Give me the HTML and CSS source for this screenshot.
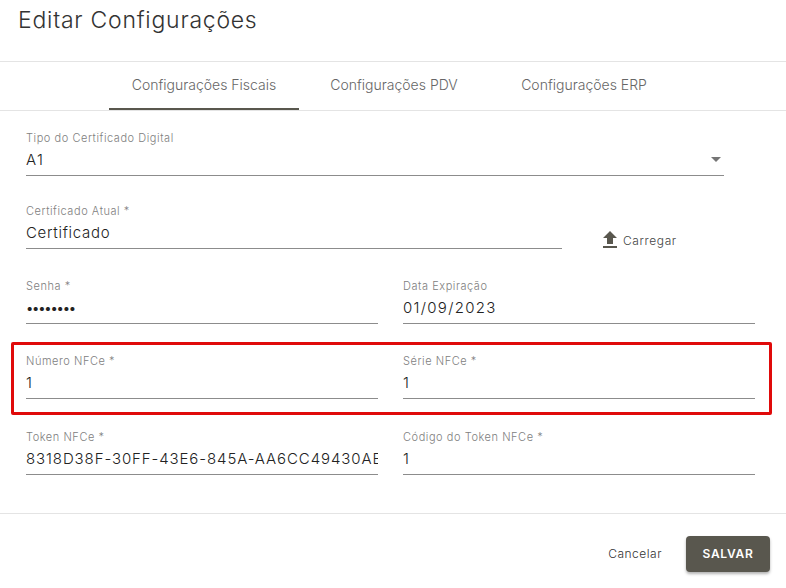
FILE: index.html
```html
<!DOCTYPE html>
<html lang="pt-BR">

<head>
    <meta charset="utf-8">
    <title>Editar Configurações</title>
    <link rel="stylesheet" href="styles.css">
</head>

<body>

    <div class="dialog">
        <h2 class="dialog-title">Editar Configurações</h2>

        <div class="tabs">
            <a class="tab active">Configurações Fiscais</a>
            <a class="tab">Configurações PDV</a>
            <a class="tab">Configurações ERP</a>
        </div>

        <div class="form">
            <div class="row row-select">
                <div class="field field-select">
                    <label>Tipo do Certificado Digital</label>
                    <div class="value value-date">A1<span class="arrow"></span></div>
                </div>
            </div>

            <div class="row row-upload">
                <div class="field field-file">
                    <label>Certificado Atual *</label>
                    <div class="value">Certificado</div>
                </div>
                <a class="upload">
                    <svg width="24" height="24" viewBox="0 0 24 24"><path d="M9 16h6v-6h4l-7-7-7 7h4zm-4 2h14v2H5z" /></svg>
                    Carregar
                </a>
            </div>

            <div class="row">
                <div class="field">
                    <label>Senha *</label>
                    <div class="value value-secret">••••••••</div>
                </div>
                <div class="field">
                    <label>Data Expiração</label>
                    <div class="value value-date">01/09/2023</div>
                </div>
            </div>

            <div class="row">
                <div class="field">
                    <label>Número NFCe *</label>
                    <div class="value">1</div>
                </div>
                <div class="field">
                    <label>Série NFCe *</label>
                    <div class="value">1</div>
                </div>
            </div>

            <div class="row row-last">
                <div class="field">
                    <label>Token NFCe *</label>
                    <div class="value value-token">8318D38F-30FF-43E6-845A-AA6CC49430AE</div>
                </div>
                <div class="field">
                    <label>Código do Token NFCe *</label>
                    <div class="value">1</div>
                </div>
            </div>

            <div class="highlight"></div>
        </div>

        <div class="actions">
            <a class="btn-cancel">Cancelar</a>
            <a class="btn-save">SALVAR</a>
        </div>
    </div>

</body>

</html>
```

FILE: styles.css
```css
body {
    margin: 0;
    font-family: Inter, "Liberation Sans", sans-serif;
    color: #333333;
    background-color: #ffffff;
    overflow: hidden;
}

.dialog {
    height: 588px;
}

.dialog-title {
    margin: 0;
    padding: 5px 18px 0;
    height: 61px;
    box-sizing: border-box;
    font-size: 23px;
    line-height: 30px;
    font-weight: 300;
    letter-spacing: .75px;
    color: #333333;
}

/* Tabs */
.tabs {
    display: flex;
    justify-content: center;
    height: 48px;
    padding-left: 2px;
    border-top: 1px solid #e4e4e4;
    border-bottom: 1px solid #e4e4e4;
}

.tab {
    width: 190px;
    box-sizing: border-box;
    padding-top: 13px;
    text-align: center;
    font-size: 14px;
    line-height: 20px;
    font-weight: 300;
    color: #666666;
}

.tab.active {
    border-bottom: 2px solid #59574e;
}

/* Form */
.form {
    position: relative;
    height: 381px;
    padding: 21px 31px 0 26px;
}

.row {
    display: flex;
    gap: 25px;
    margin-bottom: 31px;
}

.row-select {
    padding-right: 31px;
    margin-bottom: 29px;
}

.row-last {
    margin-bottom: 0;
    padding-top: 1px;
}

.field {
    flex: 1;
    min-width: 0;
}

.field label {
    display: block;
    font-size: 11px;
    line-height: 12px;
    font-weight: 300;
    letter-spacing: .55px;
    color: #808080;
}

.value {
    position: relative;
    height: 31px;
    line-height: 32px;
    font-size: 15px;
    font-weight: 300;
    letter-spacing: .7px;
    color: #222222;
    white-space: nowrap;
    overflow: hidden;
    border-bottom: 1px solid #8c8c8c;
}

.value-date {
    letter-spacing: 1.3px;
}

.value-token {
    letter-spacing: .9px;
}

.value-secret {
    font-size: 13px;
    font-weight: 400;
    letter-spacing: -1.2px;
}

.arrow {
    position: absolute;
    right: 3px;
    top: 13px;
    border-left: 5px solid transparent;
    border-right: 5px solid transparent;
    border-top: 5px solid #757575;
}

.row-upload {
    gap: 0;
}

.field-file {
    flex: 0 0 536px;
}

.upload {
    display: flex;
    align-items: center;
    margin: 23px 0 -3px 36px;
    font-size: 12px;
    font-weight: 300;
    letter-spacing: .6px;
    color: #444444;
}

.upload svg {
    fill: #59574e;
    margin-right: 1px;
}

/* Red box around the NFCe row */
.highlight {
    position: absolute;
    left: 11px;
    top: 231px;
    width: 755px;
    height: 67px;
    border: 3px solid #e00a0a;
    border-radius: 2px;
}

/* Footer */
.actions {
    display: flex;
    justify-content: flex-end;
    align-items: center;
    gap: 24px;
    height: 74px;
    box-sizing: border-box;
    padding: 6px 16px 0 0;
    border-top: 1px solid #e4e4e4;
}

.btn-cancel {
    font-size: 12px;
    font-weight: 300;
    letter-spacing: .5px;
    color: #333333;
}

.btn-save {
    width: 84px;
    height: 36px;
    line-height: 36px;
    text-align: center;
    font-size: 12px;
    font-weight: 600;
    letter-spacing: .7px;
    color: #ffffff;
    background-color: #59574e;
    border-radius: 4px;
    box-shadow: 0 2px 3px rgba(0, 0, 0, .3);
}
```
